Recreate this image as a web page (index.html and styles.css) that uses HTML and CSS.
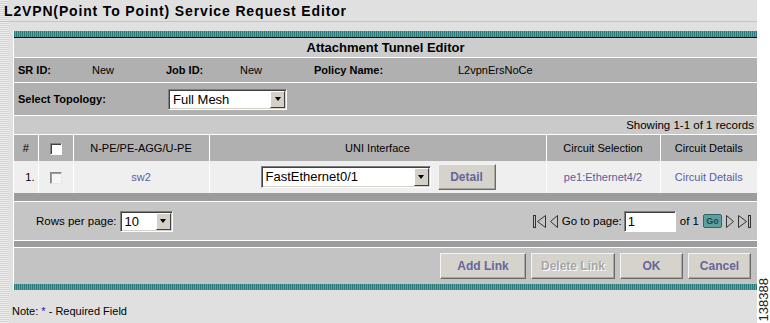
FILE: index.html
```html
<!DOCTYPE html>
<html lang="en">
<head>
  <meta charset="UTF-8">
  <meta name="viewport" content="width=device-width, initial-scale=1.0">
  <title>L2VPN(Point To Point) Service Request Editor</title>
  <link rel="stylesheet" href="styles.css">
</head>
<body>
  <div class="screen">
    <div class="page">
      <h1 class="page-title">L2VPN(Point To Point) Service Request Editor</h1>

      <div class="editor">
        <div class="teal-bar top"></div>
        <div class="editor-head">Attachment Tunnel Editor</div>

        <div class="info-row">
          <span class="lbl">SR ID:</span><span>New</span>
          <span class="lbl">Job ID:</span><span>New</span>
          <span class="lbl">Policy Name:</span><span>L2vpnErsNoCe</span>
        </div>

        <div class="topo-row">
          <span class="lbl topo-lbl">Select Topology:</span>
          <div class="combo combo-topo">
            <span class="combo-text">Full Mesh</span>
            <span class="combo-btn"></span>
          </div>
        </div>

        <div class="records">Showing 1-1 of 1 records</div>

        <table class="grid">
          <colgroup>
            <col class="c-num"><col class="c-chk"><col class="c-pe">
            <col class="c-uni"><col class="c-sel"><col class="c-det">
          </colgroup>
          <thead>
            <tr>
              <th>#</th>
              <th><span class="chk"></span></th>
              <th>N-PE/PE-AGG/U-PE</th>
              <th>UNI Interface</th>
              <th>Circuit Selection</th>
              <th>Circuit Details</th>
            </tr>
          </thead>
          <tbody>
            <tr>
              <td class="num">1.</td>
              <td><span class="chk chk-row"></span></td>
              <td><a href="#">sw2</a></td>
              <td>
                <div class="uni">
                  <div class="combo combo-uni">
                    <span class="combo-text">FastEthernet0/1</span>
                    <span class="combo-btn"></span>
                  </div>
                  <button class="btn btn-detail">Detail</button>
                </div>
              </td>
              <td><a href="#">pe1:Ethernet4/2</a></td>
              <td><a href="#">Circuit Details</a></td>
            </tr>
          </tbody>
        </table>

        <div class="sep-bar"></div>

        <div class="pager">
          <span class="rows-lbl">Rows per page:</span>
          <div class="combo combo-rows">
            <span class="combo-text">10</span>
            <span class="combo-btn"></span>
          </div>

          <div class="pager-nav">
            <svg class="nav-ico" width="14" height="15" viewBox="0 0 14 15">
              <rect x="0.5" y="1.5" width="2" height="12" fill="none" stroke="#333"/>
              <polygon points="12.5,1.5 4.5,7.5 12.5,13.5" fill="none" stroke="#333"/>
            </svg>
            <svg class="nav-ico" width="10" height="15" viewBox="0 0 10 15">
              <polygon points="8.5,1.5 1.5,7.5 8.5,13.5" fill="none" stroke="#333"/>
            </svg>
            <span class="goto-lbl">Go to page:</span>
            <span class="page-input">1</span>
            <span class="of-lbl">of 1</span>
            <span class="go-btn">Go</span>
            <svg class="nav-ico" width="10" height="15" viewBox="0 0 10 15">
              <polygon points="1.5,1.5 8.5,7.5 1.5,13.5" fill="none" stroke="#333"/>
            </svg>
            <svg class="nav-ico" width="14" height="15" viewBox="0 0 14 15">
              <polygon points="1.5,1.5 9.5,7.5 1.5,13.5" fill="none" stroke="#333"/>
              <rect x="11.5" y="1.5" width="2" height="12" fill="none" stroke="#333"/>
            </svg>
          </div>
        </div>

        <div class="sep-bar thin"></div>

        <div class="actions">
          <button class="btn btn-add">Add Link</button>
          <button class="btn btn-delete" disabled>Delete Link</button>
          <button class="btn btn-ok">OK</button>
          <button class="btn btn-cancel">Cancel</button>
        </div>

        <div class="teal-bar"></div>
      </div>

      <p class="note">Note: <span class="req">*</span> - Required Field</p>
    </div>

    <div class="margin-strip">
      <span class="fig-id">138388</span>
    </div>
  </div>
</body>
</html>
```

FILE: styles.css
```css
body {
  margin: 0;
  background: #fff;
  font-family: "Liberation Sans", Arial, sans-serif;
  font-size: 11px;
  color: #000;
}
.screen {
  display: flex;
  height: 323px;
  overflow: hidden;
}
.page {
  width: 757px;
  flex: none;
  background:
    repeating-linear-gradient(to bottom, #ececec 0 1px, #d3d3d3 1px 2px) left top / 9px 100% no-repeat,
    #e0e0e0;
}
.page-title {
  margin: 0;
  height: 21px;
  line-height: 22px;
  padding-left: 4px;
  border-bottom: 1px solid #c4c4c4;
  font-size: 14px;
  font-weight: bold;
  letter-spacing: 0.85px;
}

.editor {
  margin: 9px 0 0 13px;
  border-left: 1px solid #fff;
}
.teal-bar {
  height: 6px;
  background: repeating-linear-gradient(90deg, #2a7878 0 1px, #62a3a3 1px 2px);
}
.teal-bar.top {
  border-bottom: 1px solid #000;
}
.editor-head {
  height: 19px;
  line-height: 19px;
  text-align: center;
  font-size: 13px;
  font-weight: bold;
  background: #cdcdcd;
  border-bottom: 1px solid #fff;
}
.lbl {
  font-weight: bold;
}
.info-row {
  display: grid;
  grid-template-columns: 74px 74px 74px 74px 144px auto;
  align-items: center;
  height: 24px;
  padding-left: 4px;
  background: #b0b0b0;
  border-bottom: 1px solid #fff;
}
.topo-row {
  display: flex;
  align-items: center;
  height: 32px;
  padding-left: 4px;
  background: #b0b0b0;
  border-bottom: 1px solid #fff;
}
.topo-lbl {
  width: 150px;
}
.records {
  height: 18px;
  line-height: 18px;
  text-align: right;
  padding-right: 3px;
  font-size: 11.5px;
  background: #cacaca;
  border-bottom: 1px solid #fff;
}

/* combo boxes drawn like the old windows controls */
.combo {
  display: flex;
  box-sizing: border-box;
  height: 21px;
  background: #fff;
  border: 1px solid;
  border-color: #808080 #fff #fff #808080;
  box-shadow: inset 1px 1px #404040, inset -1px -1px #d4d0c8;
}
.combo-text {
  flex: 1;
  padding-left: 4px;
  font-size: 13px;
  line-height: 19px;
  text-align: left;
}
.combo-btn {
  display: flex;
  align-items: center;
  justify-content: center;
  width: 15px;
  margin: 1px 1px 1px 0;
  box-sizing: border-box;
  background: #d4d0c8;
  border: 1px solid;
  border-color: #fff #404040 #404040 #fff;
}
.combo-btn::after {
  content: "";
  border-top: 4px solid #000;
  border-left: 3.5px solid transparent;
  border-right: 3.5px solid transparent;
}
.combo-topo {
  width: 119px;
}
.combo-uni {
  width: 170px;
  height: 22px;
}
.combo-rows {
  width: 53px;
}

.grid {
  width: 743px;
  border-collapse: collapse;
  table-layout: fixed;
}
.c-num { width: 24px; }
.c-chk { width: 35px; }
.c-pe { width: 136px; }
.c-uni { width: 337px; }
.c-sel { width: 114px; }
.c-det { width: 97px; }
.grid th {
  height: 26px;
  padding: 0;
  font-weight: normal;
  background: #b0b0b0;
  border-left: 1px solid #fff;
}
.grid td {
  height: 32px;
  padding: 0;
  text-align: center;
  background: #efefef;
  border-left: 1px solid #fff;
}
.grid th:first-child,
.grid td:first-child {
  border-left: none;
}
.grid td.num {
  text-align: right;
  padding-right: 3px;
}
.grid a,
.grid a:visited {
  color: #5c5ca0;
  text-decoration: none;
}
.chk {
  display: inline-block;
  width: 12px;
  height: 12px;
  box-sizing: border-box;
  vertical-align: middle;
  background: #fff;
  border: 1px solid;
  border-color: #808080 #fff #fff #808080;
  box-shadow: inset 1px 1px #404040;
}
.chk-row {
  background: #f6f6f6;
  border-color: #8a8a8a #e8e8e8 #e8e8e8 #8a8a8a;
  box-shadow: inset 1px 1px #9a9a9a;
}
.uni {
  display: flex;
  align-items: center;
  justify-content: center;
  gap: 7px;
  padding-left: 1px;
}

.btn {
  box-sizing: border-box;
  height: 26px;
  padding: 0;
  font-family: "Liberation Sans", Arial, sans-serif;
  font-size: 12px;
  font-weight: bold;
  color: #666699;
  background: #d6d3cd;
  border: 1px solid;
  border-color: #f4f4f4 #6a6a6a #6a6a6a #f4f4f4;
  box-shadow: inset -1px -1px #a8a6a0;
}
.btn-detail {
  width: 58px;
}
.btn-delete {
  color: #a6a6a6;
  text-shadow: 1px 1px #fff;
}
.btn-add { width: 86px; }
.btn-delete { width: 84px; }
.btn-ok { width: 63px; }
.btn-cancel { width: 63px; }

.sep-bar {
  height: 8px;
  background: #9c9c9c;
  border-bottom: 1px solid #fff;
}
.sep-bar.thin {
  height: 6px;
}
.pager {
  display: flex;
  align-items: center;
  height: 38px;
  padding: 0 6px 0 22px;
  background: #c5c5c5;
  border-bottom: 1px solid #fff;
  font-size: 11.5px;
}
.rows-lbl {
  margin-right: 3px;
}
.pager-nav {
  display: flex;
  align-items: center;
  margin-left: auto;
}
.nav-ico {
  display: block;
}
.nav-ico + .nav-ico {
  margin-left: 2px;
}
.goto-lbl {
  margin: 0 2px 0 3px;
}
.page-input {
  box-sizing: border-box;
  width: 52px;
  height: 21px;
  padding-left: 3px;
  font-size: 13px;
  line-height: 19px;
  background: #fff;
  border: 1px solid;
  border-color: #808080 #fff #fff #808080;
  box-shadow: inset 1px 1px #404040;
}
.of-lbl {
  margin: 0 4px 0 4px;
}
.go-btn {
  box-sizing: border-box;
  width: 19px;
  height: 14px;
  margin-right: 3px;
  font-size: 9px;
  font-weight: bold;
  line-height: 12px;
  text-align: center;
  color: #174a4a;
  background: #5f9f9f;
  border: 1px solid #2c6868;
  border-radius: 2px;
}

.actions {
  display: flex;
  align-items: center;
  justify-content: flex-end;
  gap: 5px;
  height: 36px;
  padding-right: 6px;
  background: #c3c3c3;
}

.note {
  margin: 14px 0 0 12px;
  line-height: 14px;
}
.req {
  color: #1a1ab0;
}

.margin-strip {
  flex: 1;
  display: flex;
  align-items: flex-end;
  justify-content: center;
}
.fig-id {
  writing-mode: vertical-rl;
  transform: rotate(180deg);
  font-size: 13px;
  line-height: 13px;
  margin-bottom: 2px;
  color: #222;
}
```
